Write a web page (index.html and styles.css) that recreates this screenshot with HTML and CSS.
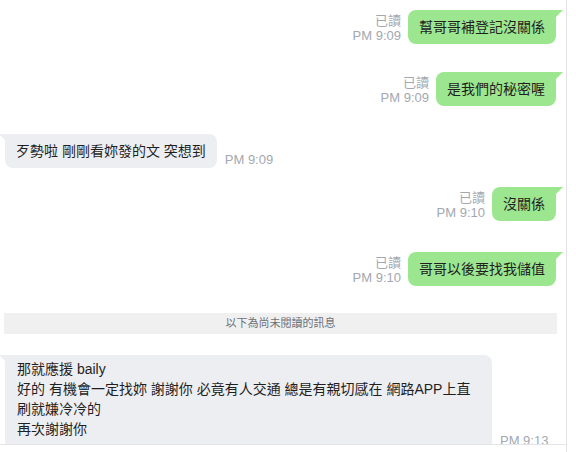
FILE: index.html
```html
<!DOCTYPE html>
<html lang="zh-Hant">
  <head>
    <meta charset="utf-8" />
    <title>Chat</title>
    <meta name="viewport" content="width=device-width, initial-scale=1.0" />
    <link rel="stylesheet" href="styles.css">
  </head>
  <body>
    <div id="app">
      <main class="chat">
        <div class="row mine first">
          <div class="meta"><span>已讀</span><span>PM 9:09</span></div>
          <div class="bubble">幫哥哥補登記沒關係</div>
        </div>
        <div class="row mine">
          <div class="meta"><span>已讀</span><span>PM 9:09</span></div>
          <div class="bubble">是我們的秘密喔</div>
        </div>
        <div class="row theirs">
          <div class="bubble">歹勢啦 剛剛看妳發的文 突想到</div>
          <div class="meta"><span>PM 9:09</span></div>
        </div>
        <div class="row mine tight">
          <div class="meta"><span>已讀</span><span>PM 9:10</span></div>
          <div class="bubble">沒關係</div>
        </div>
        <div class="row mine loose">
          <div class="meta"><span>已讀</span><span>PM 9:10</span></div>
          <div class="bubble">哥哥以後要找我儲值</div>
        </div>
        <div class="divider">以下為尚未閱讀的訊息</div>
        <div class="row theirs after-divider">
          <div class="bubble long">那就應援 baily<br />好的 有機會一定找妳 謝謝你 必竟有人交通 總是有親切感在 網路APP上直刷就嫌冷冷的<br />再次謝謝你</div>
          <div class="meta"><span>PM 9:13</span></div>
        </div>
      </main>
      <footer class="composer"></footer>
    </div>
  </body>
</html>
```

FILE: styles.css
```css
html,
body {
  margin: 0;
  background: #fff;
  font-family: "Liberation Sans", "Noto Sans CJK TC", sans-serif;
  color: #1f1f1f;
}

#app {
  width: 566px;
  height: 452px;
  border-right: 1px solid #e4e4e6;
  overflow: hidden;
}

.chat {
  height: 444px;
  overflow: hidden;
  display: flex;
  flex-direction: column;
}

.composer {
  height: 8px;
  border-top: 1px solid #e4e4e6;
}

.row {
  display: flex;
  align-items: flex-end;
  gap: 7px;
  margin-top: 28px;
}

.row.first {
  margin-top: 10px;
}

.row.tight {
  margin-top: 19px;
}

.row.loose {
  margin-top: 31px;
}

.row.after-divider {
  margin-top: 21px;
}

.row.mine {
  justify-content: flex-end;
  padding-right: 10px;
}

.row.theirs {
  padding-left: 5px;
  gap: 8px;
}

.meta {
  display: flex;
  flex-direction: column;
  text-align: right;
  font-size: 13px;
  line-height: 15px;
  color: #a3a8b0;
  padding-bottom: 1px;
}

.bubble {
  position: relative;
  font-size: 14px;
  line-height: 20px;
  padding: 7px 11px;
  border-radius: 8px;
}

.mine .bubble {
  background: #9de690;
  border-top-right-radius: 0;
}

.mine .bubble::after {
  content: "";
  position: absolute;
  top: 0;
  right: -7px;
  border-top: 7px solid #9de690;
  border-right: 7px solid transparent;
}

.theirs .bubble {
  background: #edeef2;
  border-top-left-radius: 0;
}

.theirs .bubble::after {
  content: "";
  position: absolute;
  top: 0;
  left: -6px;
  border-top: 6px solid #edeef2;
  border-left: 6px solid transparent;
}

.bubble.long {
  max-width: 463px;
  padding: 4px 12px 10px;
}

.divider {
  margin: 27px 9px 0 4px;
  height: 21px;
  line-height: 21px;
  background: #f0f0f1;
  text-align: center;
  font-size: 11px;
  color: #6e7075;
}
```
